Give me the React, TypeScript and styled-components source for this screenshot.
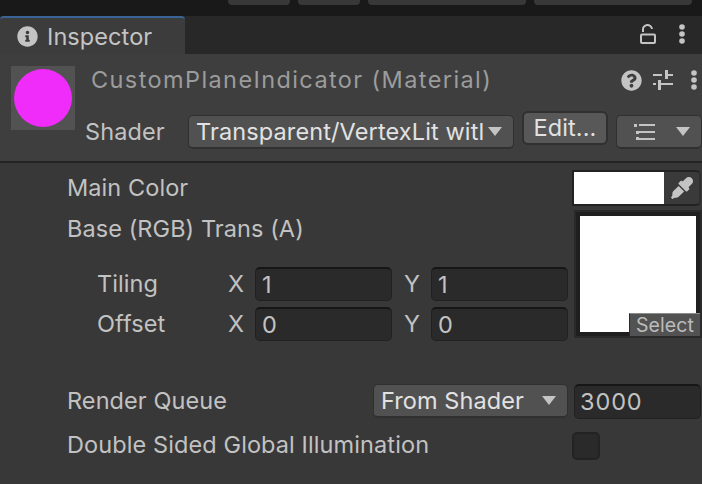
import React from "react";
import styled, { createGlobalStyle } from "styled-components";
import { FaEyeDropper, FaInfoCircle, FaQuestionCircle } from "react-icons/fa";

const GlobalStyle = createGlobalStyle`
    html, body {
        margin: 0;
        padding: 0;
        background: #383838;
    }
    * {
        box-sizing: border-box;
    }
`;

const Page = styled.div`
    width: 702px;
    height: 484px;
    overflow: hidden;
    display: flex;
    flex-direction: column;
    background: #383838;
    color: #c2c2c2;
    font-family: Inter, "Liberation Sans", sans-serif;
    font-size: 23.5px;
    line-height: 28px;
    letter-spacing: 0.08px;
`;

const TopBar = styled.div`
    height: 16px;
    flex: none;
    display: flex;
    gap: 8px;
    padding-left: 228px;
    background: #191919;
`;

const TopButton = styled.div<{ $width: number }>`
    width: ${({ $width }) => $width}px;
    height: 5px;
    background: #383838;
    border-radius: 0 0 4px 4px;
`;

const TabStrip = styled.div`
    height: 38px;
    flex: none;
    display: flex;
    align-items: center;
    justify-content: space-between;
    padding-right: 16px;
    background: #282828;
`;

const Tab = styled.div`
    width: 185px;
    height: 38px;
    display: flex;
    align-items: center;
    gap: 9px;
    padding: 1px 0 0 17px;
    background: #3c3c3c;
    border-top: 2px solid #3a6496;
    border-radius: 4px 4px 0 0;
    color: #c4c4c4;
    font-size: 23.5px;

    svg {
        margin-top: -1px;
    }
`;

const TabTools = styled.div`
    display: flex;
    align-items: center;
    gap: 22px;
    padding-bottom: 2px;
    color: #c4c4c4;
`;

const Header = styled.div`
    height: 109px;
    flex: none;
    display: flex;
    padding: 12px 0 0 11px;
    background: #3e3e3e;
    border-bottom: 2px solid #242424;
`;

const Preview = styled.div`
    width: 64px;
    height: 64px;
    flex: none;
    display: flex;
    align-items: center;
    justify-content: center;
    background: #525252;
`;

const Swatch = styled.div`
    width: 58px;
    height: 58px;
    border-radius: 50%;
    background: #ef2cf9;
`;

const HeaderMain = styled.div`
    flex: 1;
    display: flex;
    flex-direction: column;
    padding-left: 10px;
`;

const TitleRow = styled.div`
    height: 28px;
    display: flex;
    align-items: center;
    padding-left: 6px;
`;

const Title = styled.div`
    flex: 1;
    color: #9c9c9c;
    letter-spacing: 1.4px;
`;

const TitleTools = styled.div`
    display: flex;
    align-items: center;
    gap: 11px;
    padding-right: 4px;
    color: #c4c4c4;
`;

const TitleDots = styled.div`
    display: flex;
    margin-left: 6px;
`;

const ShaderRow = styled.div`
    display: flex;
    align-items: flex-start;
    margin-top: 21px;
`;

const ShaderLabel = styled.div`
    width: 103px;
    margin-top: 3px;
`;

const Dropdown = styled.div<{ $width: number }>`
    width: ${({ $width }) => $width}px;
    height: 34px;
    flex: none;
    display: flex;
    align-items: center;
    justify-content: space-between;
    padding: 0 11px 0 7px;
    background: #515151;
    border: 1px solid #303030;
    border-bottom-width: 2px;
    border-radius: 5px;
    color: #e2e2e2;
    white-space: nowrap;
    overflow: hidden;
`;

const ShaderName = styled.span`
    letter-spacing: 0.12px;
`;

const Caret = styled.span`
    width: 0;
    height: 0;
    flex: none;
    border-left: 7px solid transparent;
    border-right: 7px solid transparent;
    border-top: 9px solid #c4c4c4;
`;

const EditButton = styled.div`
    width: 86px;
    height: 34px;
    flex: none;
    margin: -4px 8px 0;
    display: flex;
    align-items: center;
    justify-content: center;
    background: #585858;
    border: 2px solid #303030;
    border-radius: 6px;
    color: #e2e2e2;
`;

const Body = styled.div`
    flex: 1;
    padding: 7px 0 0 67px;
`;

const ColorRow = styled.div`
    height: 36px;
    display: flex;
    align-items: center;
    justify-content: space-between;
    margin-bottom: 4px;
`;

const ColorField = styled.div`
    width: 129px;
    height: 36px;
    margin-right: 1px;
    display: flex;
    background: #3a3a3a;
    border: 2px solid #222222;
    border-right-color: #2e2e2e;
    border-radius: 0 5px 5px 0;
`;

const ColorValue = styled.div`
    width: 90px;
    background: #ffffff;
`;

const Picker = styled.div`
    flex: 1;
    display: flex;
    align-items: center;
    justify-content: center;
    color: #c4c4c4;
`;

const TextureRow = styled.div`
    display: flex;
    justify-content: space-between;
`;

const TextureLabel = styled.div`
    height: 28px;
    margin-top: 5px;
`;

const Vectors = styled.div`
    display: flex;
    flex-direction: column;
    gap: 6px;
    padding: 24px 0 0 30px;
`;

const VectorRow = styled.div`
    display: flex;
    align-items: center;
`;

const VectorLabel = styled.div`
    width: 131px;
`;

const Axis = styled.div<{ $width: number; $inset?: number }>`
    width: ${({ $width }) => $width}px;
    padding-left: ${({ $inset }) => $inset ?? 0}px;
`;

const Field = styled.div<{ $width: number }>`
    width: ${({ $width }) => $width}px;
    height: 34px;
    flex: none;
    display: flex;
    align-items: center;
    padding-left: 6px;
    background: #2a2a2a;
    border: 1px solid #212121;
    border-top: 2px solid #161616;
    border-radius: 5px;
    letter-spacing: 0.6px;
`;

const TextureBox = styled.div`
    position: relative;
    width: 128px;
    height: 128px;
    flex: none;
    padding: 6px;
    background: #1f1f1f;
    box-shadow: inset 0 0 0 2px #2a2a2a;
`;

const TextureImage = styled.div`
    width: 116px;
    height: 116px;
    background: #ffffff;
`;

const SelectBadge = styled.div`
    position: absolute;
    right: 2px;
    bottom: 2px;
    width: 71px;
    height: 23px;
    display: flex;
    align-items: center;
    justify-content: center;
    background: #525252;
    border-top: 1px solid #8c8c8c;
    border-left: 1px solid #2a2a2a;
    color: #bcbcbc;
    font-size: 19.5px;
`;

const QueueRow = styled.div`
    height: 36px;
    display: flex;
    align-items: center;
    margin-top: 42px;
`;

const QueueLabel = styled.div`
    width: 306px;
`;

const QueueValue = styled(Field)`
    height: 35px;
    margin-left: 6px;
    padding-left: 5px;
    letter-spacing: 0.9px;
`;

const CheckRow = styled.div`
    height: 28px;
    display: flex;
    align-items: center;
    margin-top: 13px;
`;

const CheckLabel = styled.div`
    width: 505px;
    margin-top: -2px;
    letter-spacing: 0.1px;
`;

const CheckBox = styled.div`
    width: 28px;
    height: 28px;
    background: #2a2a2a;
    border: 2px solid #232323;
    border-radius: 5px;
`;

const ListDropdown = styled(Dropdown)`
    padding-left: 17px;
    color: #c4c4c4;
`;

const Dots = () => (
    <svg width="8" height="20" viewBox="0 0 8 20" fill="currentColor">
        <circle cx="4" cy="3" r="2.8" />
        <circle cx="4" cy="10" r="2.8" />
        <circle cx="4" cy="17" r="2.8" />
    </svg>
);

const LockIcon = () => (
    <svg width="16" height="20" viewBox="0 0 16 20" fill="none" stroke="currentColor" strokeWidth="2">
        <rect x="1" y="10.5" width="14" height="8.5" rx="1" />
        <path d="M3 8V6a4.5 4.5 0 0 1 9-1" />
    </svg>
);

const SlidersIcon = () => (
    <svg width="20" height="20" viewBox="0 0 20 20" fill="currentColor">
        <rect x="0" y="4" width="9" height="2" />
        <rect x="12" y="0" width="3" height="9" />
        <rect x="15" y="4" width="5" height="2" />
        <rect x="0" y="13" width="3" height="2" />
        <rect x="5" y="10" width="3" height="10" />
        <rect x="8" y="13" width="12" height="2" />
    </svg>
);

const ListIcon = () => (
    <svg width="22" height="18" viewBox="0 0 22 18" fill="currentColor">
        <rect x="0" y="1" width="3" height="3" />
        <rect x="5" y="1" width="16" height="2" />
        <rect x="2" y="8" width="3" height="3" />
        <rect x="5" y="8" width="16" height="2" />
        <rect x="2" y="14" width="3" height="3" />
        <rect x="5" y="15" width="16" height="2" />
    </svg>
);

export default function App() {
    return (
        <Page>
            <GlobalStyle />
            <TopBar>
                <TopButton $width={62} />
                <TopButton $width={62} />
                <TopButton $width={158} />
                <TopButton $width={158} />
            </TopBar>
            <TabStrip>
                <Tab>
                    <FaInfoCircle size={21} />
                    Inspector
                </Tab>
                <TabTools>
                    <LockIcon />
                    <Dots />
                </TabTools>
            </TabStrip>
            <Header>
                <Preview>
                    <Swatch />
                </Preview>
                <HeaderMain>
                    <TitleRow>
                        <Title>CustomPlaneIndicator (Material)</Title>
                        <TitleTools>
                            <FaQuestionCircle size={21} />
                            <SlidersIcon />
                            <TitleDots>
                                <Dots />
                            </TitleDots>
                        </TitleTools>
                    </TitleRow>
                    <ShaderRow>
                        <ShaderLabel>Shader</ShaderLabel>
                        <Dropdown $width={326}>
                            <ShaderName>Transparent/VertexLit witl</ShaderName>
                            <Caret />
                        </Dropdown>
                        <EditButton>Edit...</EditButton>
                        <ListDropdown $width={86}>
                            <ListIcon />
                            <Caret />
                        </ListDropdown>
                    </ShaderRow>
                </HeaderMain>
            </Header>
            <Body>
                <ColorRow>
                    <div>Main Color</div>
                    <ColorField>
                        <ColorValue />
                        <Picker>
                            <FaEyeDropper size={22} />
                        </Picker>
                    </ColorField>
                </ColorRow>
                <TextureRow>
                    <div>
                        <TextureLabel>Base (RGB) Trans (A)</TextureLabel>
                        <Vectors>
                            <VectorRow>
                                <VectorLabel>Tiling</VectorLabel>
                                <Axis $width={27}>X</Axis>
                                <Field $width={137}>1</Field>
                                <Axis $width={39} $inset={12}>Y</Axis>
                                <Field $width={137}>1</Field>
                            </VectorRow>
                            <VectorRow>
                                <VectorLabel>Offset</VectorLabel>
                                <Axis $width={27}>X</Axis>
                                <Field $width={137}>0</Field>
                                <Axis $width={39} $inset={12}>Y</Axis>
                                <Field $width={137}>0</Field>
                            </VectorRow>
                        </Vectors>
                    </div>
                    <TextureBox>
                        <TextureImage />
                        <SelectBadge>Select</SelectBadge>
                    </TextureBox>
                </TextureRow>
                <QueueRow>
                    <QueueLabel>Render Queue</QueueLabel>
                    <Dropdown $width={195}>
                        <span>From Shader</span>
                        <Caret />
                    </Dropdown>
                    <QueueValue $width={127}>3000</QueueValue>
                </QueueRow>
                <CheckRow>
                    <CheckLabel>Double Sided Global Illumination</CheckLabel>
                    <CheckBox />
                </CheckRow>
            </Body>
        </Page>
    );
}
